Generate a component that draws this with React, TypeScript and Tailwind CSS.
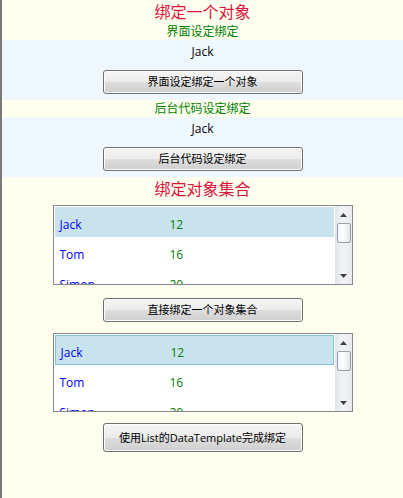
const font = { fontFamily: '"Open Sans", "Noto Sans CJK SC", sans-serif' }

const people = [
  { name: 'Jack', age: 12 },
  { name: 'Tom', age: 16 },
  { name: 'Simon', age: 20 },
]

function AeroButton({ label, tall }: { label: string; tall?: boolean }) {
  return (
    <button
      className={`w-[200px] ${tall ? 'h-[29px]' : 'h-[24px]'} rounded-[3px] border border-[#707070] text-[11px] text-black bg-[linear-gradient(to_bottom,#f4f4f4_0%,#ececec_50%,#dedede_50%,#cfcfcf_100%)] shadow-[inset_0_0_0_1px_#fcfcfc]`}
    >
      {label}
    </button>
  )
}

function ScrollBar() {
  return (
    <div className="w-[17px] flex flex-col bg-[linear-gradient(to_right,#e3e6ea,#f2f3f5_40%,#e8eaee)] border-l border-[#e0e3e8]">
      <div className="h-[17px] flex items-center justify-center">
        <svg width="7" height="4" viewBox="0 0 7 4">
          <path d="M0 4 L3.5 0 L7 4 Z" fill="#404040" />
        </svg>
      </div>
      <div className="mx-[1px] h-[20px] rounded-[2px] border border-[#9aa0a8] bg-[linear-gradient(to_right,#f6f7f8,#ffffff_45%,#e4e6ea)]" />
      <div className="flex-1" />
      <div className="h-[17px] flex items-center justify-center">
        <svg width="7" height="4" viewBox="0 0 7 4">
          <path d="M0 0 L3.5 4 L7 0 Z" fill="#404040" />
        </svg>
      </div>
    </div>
  )
}

function PeopleList({ focused, short }: { focused?: boolean; short?: boolean }) {
  return (
    <div className={`w-[300px] ${short ? 'h-[79px]' : 'h-[80px]'} border border-[#828790] bg-white flex`}>
      <div className="flex-1 overflow-hidden p-[1px]">
        {people.map((p, i) => (
          <div
            key={p.name}
            className={`h-[30px] flex items-center pt-[6px] pl-[5px] text-[12px] ${
              i === 0
                ? focused
                  ? 'bg-[#c9e3ec] border border-[#7ec4d8] pl-[4px]'
                  : 'bg-[#c9e3ec]'
                : ''
            }`}
          >
            <span className="w-[110px] text-[#0000ff]">{p.name}</span>
            <span className="text-[#008000]">{p.age}</span>
          </div>
        ))}
      </div>
      <ScrollBar />
    </div>
  )
}

export default function App() {
  return (
    <div
      className="w-[403px] h-[498px] bg-[#fffff0] border-l-2 border-[#7a7a7a] flex flex-col items-center overflow-hidden"
      style={font}
    >
      <div className="h-[24px] flex items-center text-[16px] text-[#dc143c]">绑定一个对象</div>
      <div className="h-[16px] flex items-center text-[12px] text-[#008000]">界面设定绑定</div>
      <div className="w-full h-[60px] bg-[#f0f8ff] flex flex-col items-center pt-[4px]">
        <div className="h-[16px] flex items-center text-[12px] text-black">Jack</div>
        <div className="mt-[8px]">
          <AeroButton label="界面设定绑定一个对象" />
        </div>
      </div>
      <div className="h-[17px] flex items-center text-[12px] text-[#008000]">后台代码设定绑定</div>
      <div className="w-full h-[60px] bg-[#f0f8ff] flex flex-col items-center pt-[4px]">
        <div className="h-[16px] flex items-center text-[12px] text-black">Jack</div>
        <div className="mt-[8px]">
          <AeroButton label="后台代码设定绑定" />
        </div>
      </div>
      <div className="h-[24px] flex items-center text-[16px] text-[#dc143c]">绑定对象集合</div>
      <div className="mt-[4px]">
        <PeopleList />
      </div>
      <div className="mt-[11px]">
        <AeroButton label="直接绑定一个对象集合" />
      </div>
      <div className="mt-[11px]">
        <PeopleList focused short />
      </div>
      <div className="mt-[11px]">
        <AeroButton label="使用List的DataTemplate完成绑定" tall />
      </div>
    </div>
  )
}
